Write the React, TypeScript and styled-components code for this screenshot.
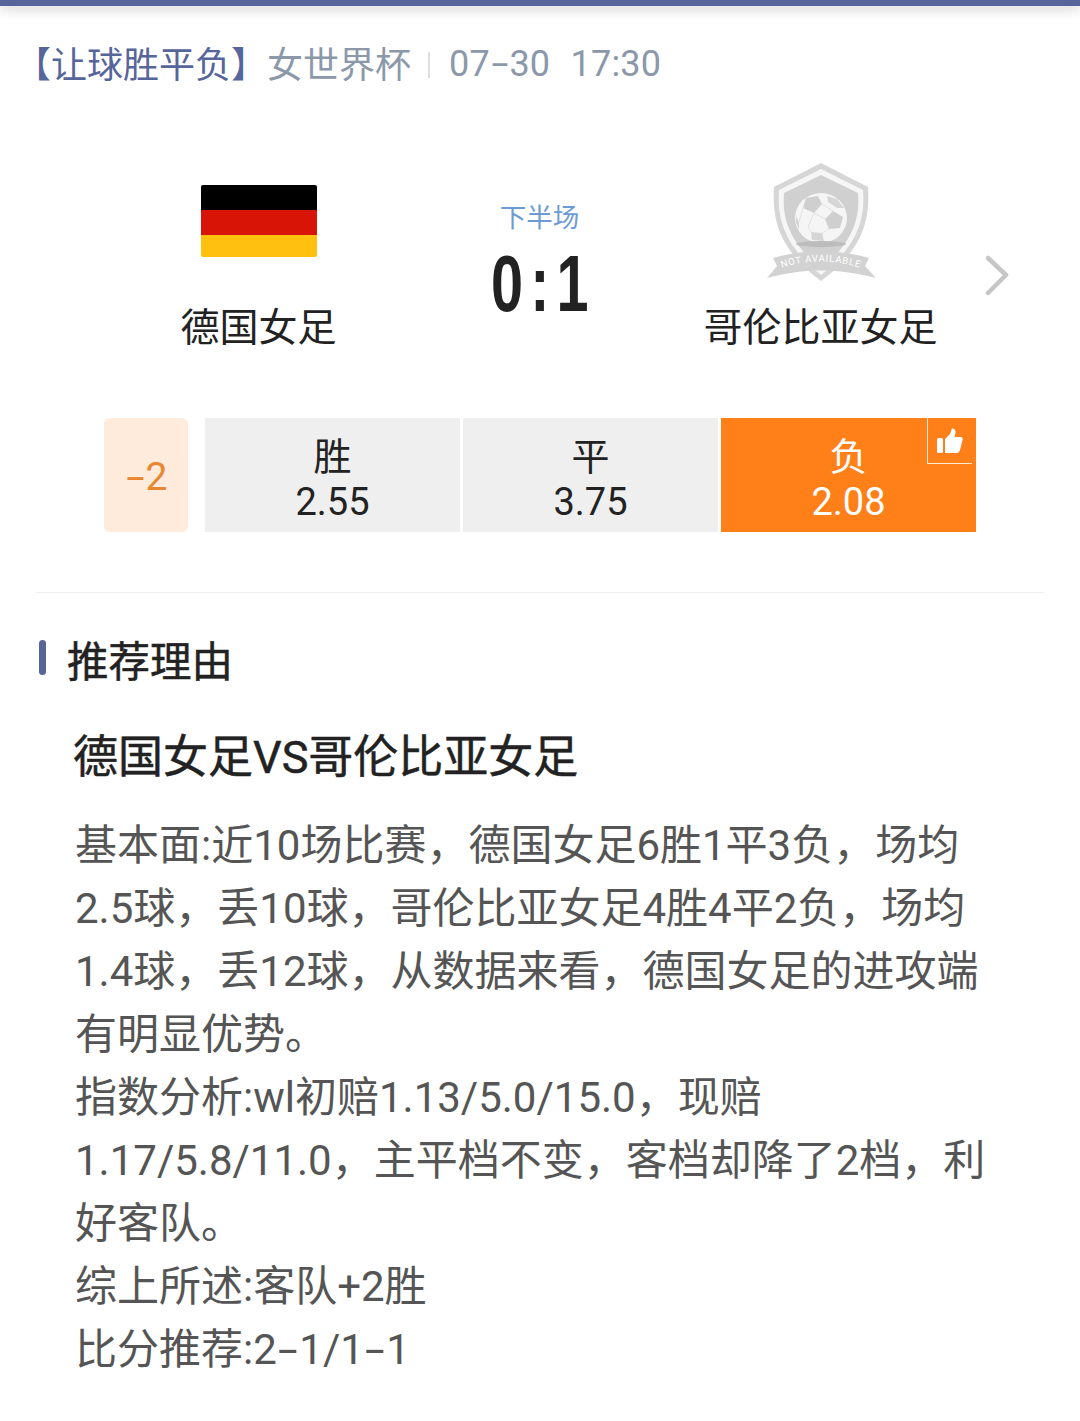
import React from 'react'
import styled, { createGlobalStyle } from 'styled-components'

const GlobalStyle = createGlobalStyle`
  html, body {
    margin: 0;
    padding: 0;
    background: #fff;
  }
  body {
    font-family: Roboto, "Noto Sans CJK SC", sans-serif;
    color: #222;
  }
`

const Page = styled.div`
  width: 1080px;
  height: 1421px;
  overflow: hidden;
  background: #fff;
`

const TopBar = styled.div`
  height: 6px;
  background: #56659a;
  box-shadow: 0 3px 12px rgba(60, 60, 70, 0.28);
`

const Header = styled.div`
  display: flex;
  align-items: center;
  height: 54px;
  margin-top: 29px;
  padding-left: 15px;
  font-size: 36px;
  white-space: nowrap;
`

const MatchType = styled.span`
  color: #56659a;
`

const League = styled.span`
  color: #8b98aa;
`

const Sep = styled.span`
  width: 2px;
  height: 26px;
  margin: 6px 19px 0 17px;
  background: #dcdfe3;
`

const Time = styled.span`
  margin-top: 4px;
  color: #8b98aa;
  white-space: pre;
  word-spacing: 1px;
  letter-spacing: 0.2px;
`

const Hy = styled.span`
  display: inline-block;
  margin: 0 0.13em;
  transform: scaleX(1.7);
`

const Teams = styled.div`
  display: grid;
  grid-template-columns: 281px 281px 281px 1fr;
  height: 288px;
  margin-top: 16px;
  padding-left: 118px;
`

const Team = styled.div`
  display: flex;
  flex-direction: column;
  align-items: center;
  padding-top: 56px;
`

const LogoBox = styled.div`
  display: flex;
  align-items: center;
  justify-content: center;
  height: 120px;
`

const TeamName = styled.div`
  margin-top: 22px;
  font-size: 39px;
  line-height: 50px;
  white-space: nowrap;
`

const Flag = styled.div`
  width: 116px;
  height: 72px;
  border-radius: 2px;
  overflow: hidden;
  background: linear-gradient(
    #000 0 25px,
    #d81406 25px 50px,
    #ffc00f 50px
  );
`

const Center = styled.div`
  display: flex;
  flex-direction: column;
  align-items: center;
  padding-top: 97px;
`

const Period = styled.div`
  font-size: 26.5px;
  line-height: 32px;
  color: #6c9bd3;
`

const Score = styled.div`
  margin-top: 8px;
  padding-left: 10px;
  font-family: "Liberation Sans", sans-serif;
  font-weight: 700;
  font-size: 80px;
  line-height: 84px;
  letter-spacing: 10px;
  color: #222;
  transform: scaleX(0.72);
`

const Chevron = styled.svg`
  width: 26px;
  height: 42px;
  margin: 150px 0 0 24px;
`

const Odds = styled.div`
  display: flex;
  height: 114px;
  margin-top: 25px;
  padding-left: 104px;
`

const Handicap = styled.div`
  display: flex;
  align-items: center;
  justify-content: center;
  width: 84px;
  margin-right: 17px;
  padding-top: 3px;
  box-sizing: border-box;
  border-radius: 6px;
  background: #ffebdc;
  color: #e8872f;
  font-size: 39px;
`

const Option = styled.div<{ $active?: boolean }>`
  position: relative;
  display: flex;
  flex-direction: column;
  align-items: center;
  justify-content: center;
  width: 255px;
  margin-right: 3px;
  padding-top: 10px;
  box-sizing: border-box;
  background: ${(p) => (p.$active ? '#ff7f18' : '#efefef')};
  color: ${(p) => (p.$active ? '#fff' : '#222')};
  font-size: 38px;
  line-height: 45px;
`

const ThumbCorner = styled.div`
  position: absolute;
  top: 0;
  right: 4px;
  display: flex;
  align-items: center;
  justify-content: center;
  width: 44px;
  height: 45px;
  border-left: 1.5px solid #ffe9d0;
  border-bottom: 1.5px solid #ffe9d0;
`

const Divider = styled.div`
  height: 1px;
  margin: 60px 36px 0;
  background: #eeeeee;
`

const SectionHead = styled.div`
  display: flex;
  align-items: center;
  height: 56px;
  margin-top: 38px;
  padding-left: 39px;
  font-size: 41.5px;
  -webkit-text-stroke: 0.5px #222;
`

const Mark = styled.span`
  width: 7px;
  height: 35px;
  margin: -3px 21px 0 0;
  border-radius: 4px;
  background: #56659a;
`

const Title = styled.div`
  margin-top: 41px;
  padding-left: 73px;
  font-size: 45px;
  line-height: 60px;
  white-space: nowrap;
  -webkit-text-stroke: 0.5px #222;
`

const Body = styled.div`
  margin-top: 26px;
  padding-left: 75px;
`

const Line = styled.div`
  font-size: 42px;
  line-height: 63px;
  color: #555;
  white-space: nowrap;
`

const bodyLines = [
  '基本面:近10场比赛，德国女足6胜1平3负，场均',
  '2.5球，丢10球，哥伦比亚女足4胜4平2负，场均',
  '1.4球，丢12球，从数据来看，德国女足的进攻端',
  '有明显优势。',
  '指数分析:wl初赔1.13/5.0/15.0，现赔',
  '1.17/5.8/11.0，主平档不变，客档却降了2档，利',
  '好客队。',
  '综上所述:客队+2胜',
  '比分推荐:2-1/1-1',
]

// the hyphen in the reference font is a lot wider than Roboto's
function withHyphens(text: string) {
  return text.split('-').map((part, i) => (
    <React.Fragment key={i}>
      {i > 0 && <Hy>-</Hy>}
      {part}
    </React.Fragment>
  ))
}

function NotAvailableBadge() {
  return (
    <svg width="110" height="120" viewBox="0 0 110 120">
      <path d="M55 2 L102 26 C104 58 98 88 55 120 C12 88 6 58 8 26 Z" fill="#d6d6d6" />
      <path d="M55 8 L97 29 C99 56 93 84 55 114 C17 84 11 56 13 29 Z" fill="#f6f6f6" />
      <path d="M55 14 L92 32 C94 56 88 80 55 108 C22 80 16 56 18 32 Z" fill="#d0d0d0" />
      <ellipse cx="55" cy="57" rx="26" ry="25" fill="#f5f5f5" />
      <path d="M40 37 L52 35 L56 43 L48 52 L37 47 Z" fill="#cfcfcf" />
      <path d="M67 50 L77 56 L74 67 L63 68 L59 58 Z" fill="#cfcfcf" />
      <path d="M61 35 L71 38 L78 47 L71 47 L62 41 Z" fill="#d6d6d6" />
      <path d="M45 71 L56 72 L58 80 L46 79 Z" fill="#d6d6d6" />
      <path d="M30 55 L33 61 L33 68 L30 62 Z" fill="#d6d6d6" />
      <path d="M48 52 L42 66 L45 71 M56 43 L67 50 M59 58 L48 52 M63 68 L56 72 M37 47 L33 61" stroke="#e2e2e2" strokeWidth="1" fill="none" />
      <ellipse cx="55" cy="83" rx="25" ry="3" fill="#bcbcbc" />
      <path d="M1 117 L11 105 L7 97 C38 88 72 88 103 97 L99 105 L110 117 C72 107 38 107 1 117 Z" fill="#d2d2d2" />
      <path id="ribbon" d="M12 108 C40 98 70 98 98 108" fill="none" />
      <text fontFamily="Roboto, sans-serif" fontSize="9.5" fill="#fff" letterSpacing="0.8">
        <textPath href="#ribbon" startOffset="50%" textAnchor="middle">
          NOT AVAILABLE
        </textPath>
      </text>
    </svg>
  )
}

function ThumbIcon() {
  return (
    <svg width="26" height="26" viewBox="0 0 26 26" fill="#fff">
      <rect x="0" y="10" width="6" height="15" rx="1.5" />
      <path d="M8 11 L13 6 C14 4 14 2 15 0.5 C17 0 19 2 18.5 5 L17.5 9 H24 C25.5 9 26 11 25.5 12 L23 22 C22.5 24 21.5 25 19.5 25 H8 Z" />
    </svg>
  )
}

export default function App() {
  return (
    <Page>
      <GlobalStyle />
      <TopBar />
      <Header>
        <MatchType>【让球胜平负】</MatchType>
        <League>女世界杯</League>
        <Sep />
        <Time>{withHyphens('07-30  17:30')}</Time>
      </Header>
      <Teams>
        <Team>
          <LogoBox>
            <Flag />
          </LogoBox>
          <TeamName>德国女足</TeamName>
        </Team>
        <Center>
          <Period>下半场</Period>
          <Score>0:1</Score>
        </Center>
        <Team>
          <LogoBox>
            <NotAvailableBadge />
          </LogoBox>
          <TeamName>哥伦比亚女足</TeamName>
        </Team>
        <Chevron viewBox="0 0 26 42" fill="none">
          <path d="M3 3 L21 20 L3 38" stroke="#c6c6c6" strokeWidth="4.5" strokeLinecap="round" strokeLinejoin="round" />
        </Chevron>
      </Teams>
      <Odds>
        <Handicap>{withHyphens('-2')}</Handicap>
        <Option>
          <span>胜</span>
          <span>2.55</span>
        </Option>
        <Option>
          <span>平</span>
          <span>3.75</span>
        </Option>
        <Option $active>
          <span>负</span>
          <span>2.08</span>
          <ThumbCorner>
            <ThumbIcon />
          </ThumbCorner>
        </Option>
      </Odds>
      <Divider />
      <SectionHead>
        <Mark />
        推荐理由
      </SectionHead>
      <Title>德国女足VS哥伦比亚女足</Title>
      <Body>
        {bodyLines.map((line) => (
          <Line key={line}>{withHyphens(line)}</Line>
        ))}
      </Body>
    </Page>
  )
}
